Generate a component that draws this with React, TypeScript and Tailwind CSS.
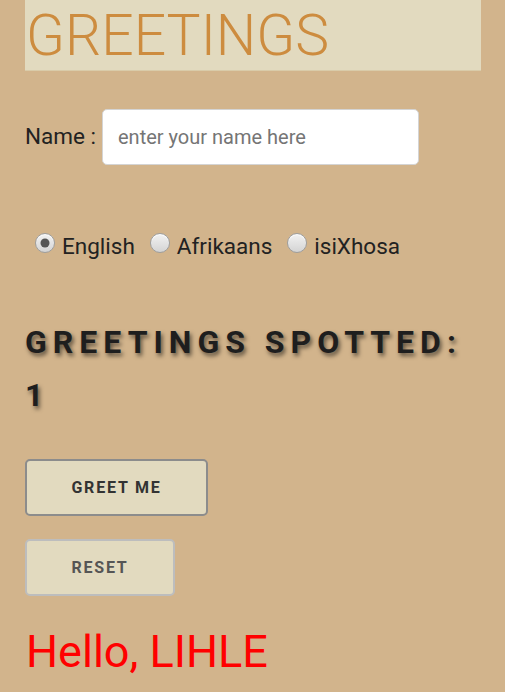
import { useState } from "react";

const languages = ["English", "Afrikaans", "isiXhosa"];

function Radio({ checked }: { checked: boolean }) {
    return (
        <span className="relative inline-block w-[20px] h-[20px] rounded-full border border-[#9e9e9e] bg-gradient-to-b from-[#f2f2f2] to-[#d4d4d4] shadow-[inset_0_1px_1px_rgba(255,255,255,0.8)]">
            {checked && (
                <span className="absolute left-1/2 top-1/2 w-[9px] h-[9px] -translate-x-1/2 -translate-y-1/2 rounded-full bg-[#555]"></span>
            )}
        </span>
    );
}

export default function App() {
    const [name, setName] = useState("");
    const [lang, setLang] = useState("English");

    return (
        <div className="min-h-[692px] bg-[#d2b48c] font-['Roboto',sans-serif] text-[#222]">
            <div className="mx-[25px] w-[456px]">
                <h1 className="h-[71px] bg-[#e2dabf] border-b border-[#d9cba9] text-[57px] leading-[71px] font-light text-[#cd8c3f] pl-[1px]">
                    GREETINGS
                </h1>

                <div className="flex items-center mt-[38px]">
                    <label className="text-[22.5px] mr-[6px]">Name :</label>
                    <input
                        type="text"
                        value={name}
                        onChange={(e) => setName(e.target.value)}
                        placeholder="enter your name here"
                        className="w-[317px] h-[56px] bg-white border border-[#d4d4d4] rounded-[5px] px-[15px] text-[20px] placeholder:text-[#757575] outline-none"
                    />
                </div>

                <div className="flex items-center mt-[69px] ml-[10px] h-[26px] text-[22.5px]">
                    {languages.map((l) => (
                        <label
                            key={l}
                            onClick={() => setLang(l)}
                            className="flex items-center mr-[15px] cursor-pointer"
                        >
                            <span className="mr-[7px] -mt-[8px] flex">
                                <Radio checked={lang === l} />
                            </span>
                            {l}
                        </label>
                    ))}
                </div>

                <h2 className="mt-[56px] text-[32px] leading-[53px] font-bold tracking-[6px] text-[#1e1e1e] [text-shadow:2px_3px_4px_rgba(0,0,0,0.55)]">
                    GREETINGS SPOTTED: 1
                </h2>

                <button className="block mt-[37px] h-[57px] w-[183px] bg-[#e2dabf] border-2 border-[#8c8c8c] rounded-[5px] text-[16px] font-bold tracking-[1.8px] text-[#333]">
                    GREET ME
                </button>
                <button className="block mt-[23px] h-[57px] w-[150px] bg-[#e2dabf] border-2 border-[#bdbdbd] rounded-[5px] text-[16px] font-bold tracking-[1.8px] text-[#555]">
                    RESET
                </button>

                <p className="mt-[30px] ml-[1px] text-[45px] leading-[52px] text-[#ff0000]">
                    Hello, LIHLE
                </p>
            </div>
        </div>
    );
}
